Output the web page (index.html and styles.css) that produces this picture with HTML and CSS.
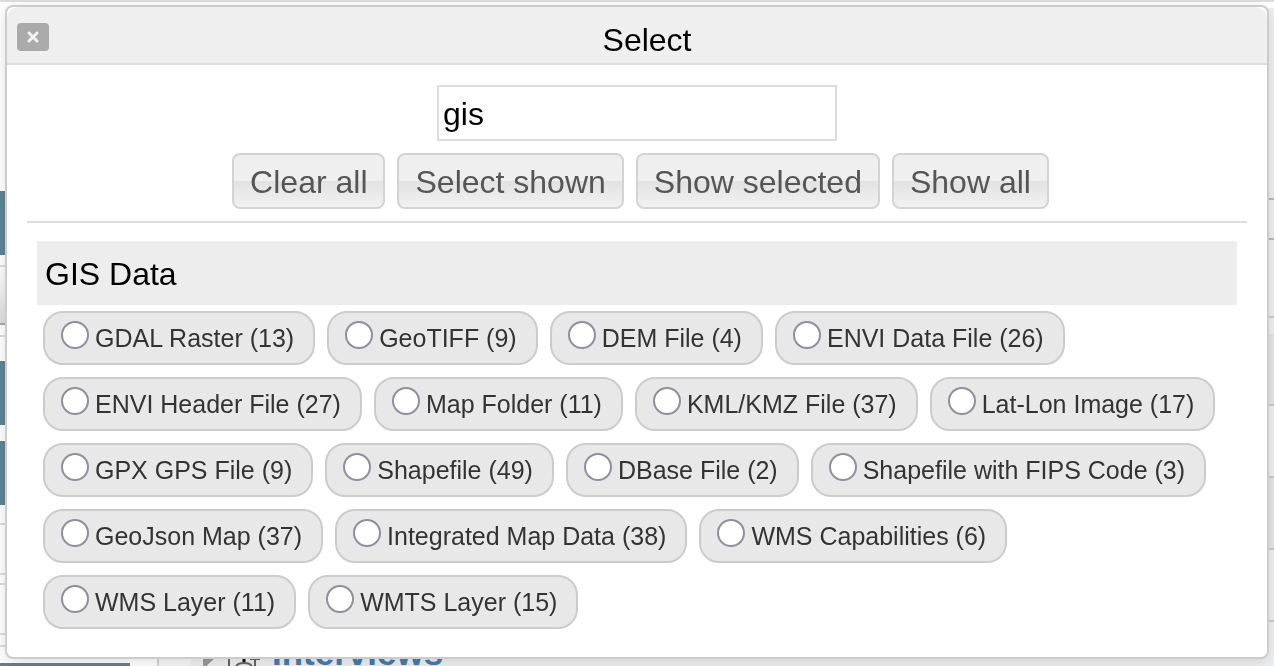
FILE: index.html
```
<!DOCTYPE html>
<html lang="en">
<head>
<meta charset="utf-8">
<title>Select</title>
<link rel="stylesheet" href="styles.css">
</head>
<body>
<div class="top-bar"></div>
<div class="page">
  <aside class="side">
    <div class="tab tab-first"></div>
    <div class="menu"></div>
    <div class="rule"></div>
    <div class="tab tab-mid"></div>
    <div class="tab"></div>
    <div class="box box-first"></div>
    <div class="box"></div>
    <div class="rule rule-last"></div>
    <div class="tab tab-last"></div>
  </aside>
  <main class="content">
    <div class="entries">
      <div class="row row-head"></div>
      <div class="row row-bar"></div>
      <div class="row row-tall"></div>
      <div class="row row-gap"></div>
      <div class="row row-alt"></div>
      <div class="row"></div>
      <div class="row row-alt"></div>
      <div class="row"></div>
    </div>
    <div class="entry">
      <svg class="arrow" width="14" height="28" viewBox="0 0 14 28" aria-hidden="true"><path d="M1 8H14V18L1 30z" fill="#999"/></svg>
      <svg class="page-icon" width="32" height="28" viewBox="0 0 32 28" aria-hidden="true"><path d="M1 0v28M8 29q0-5 8-5t8 5M22 20h10M27 20v8" fill="none" stroke="#666" stroke-width="2"/><path d="M16 19v4" stroke="#111" stroke-width="3"/></svg>
      <a href="#interviews" class="entry-link">Interviews</a>
    </div>
  </main>
</div>

<section class="dialog" role="dialog" aria-labelledby="dialog-title">
  <header class="dialog-head">
    <button type="button" class="close" aria-label="Close">
      <svg width="12" height="12" viewBox="0 0 12 12" aria-hidden="true"><path d="M2 2l8 8M10 2l-8 8" stroke="#f2f2f2" stroke-width="3" stroke-linecap="round"/></svg>
    </button>
    <h1 class="title" id="dialog-title">Select</h1>
  </header>
  <div class="dialog-body">
    <div class="tools">
      <input class="search" type="text" value="gis" aria-label="Search types">
      <div class="buttons">
        <button type="button" class="btn">Clear all</button>
        <button type="button" class="btn">Select shown</button>
        <button type="button" class="btn">Show selected</button>
        <button type="button" class="btn">Show all</button>
      </div>
    </div>
    <div class="group">
      <h2 class="group-title">GIS Data</h2>
      <div class="chips">
        <label class="chip"><input type="radio" name="type">GDAL Raster (13)</label>
        <label class="chip"><input type="radio" name="type">GeoTIFF (9)</label>
        <label class="chip"><input type="radio" name="type">DEM File (4)</label>
        <label class="chip"><input type="radio" name="type">ENVI Data File (26)</label>
        <label class="chip"><input type="radio" name="type">ENVI Header File (27)</label>
        <label class="chip"><input type="radio" name="type">Map Folder (11)</label>
        <label class="chip"><input type="radio" name="type">KML/KMZ File (37)</label>
        <label class="chip"><input type="radio" name="type">Lat-Lon Image (17)</label>
        <label class="chip"><input type="radio" name="type">GPX GPS File (9)</label>
        <label class="chip"><input type="radio" name="type">Shapefile (49)</label>
        <label class="chip"><input type="radio" name="type">DBase File (2)</label>
        <label class="chip"><input type="radio" name="type">Shapefile with FIPS Code (3)</label>
        <label class="chip"><input type="radio" name="type">GeoJson Map (37)</label>
        <label class="chip"><input type="radio" name="type">Integrated Map Data (38)</label>
        <label class="chip"><input type="radio" name="type">WMS Capabilities (6)</label>
        <label class="chip"><input type="radio" name="type">WMS Layer (11)</label>
        <label class="chip"><input type="radio" name="type">WMTS Layer (15)</label>
      </div>
    </div>
  </div>
</section>
</body>
</html>
```
FILE: styles.css
```
* { box-sizing: border-box; }

body {
  display: flex;
  flex-direction: column;
  margin: 0;
  height: 100vh;
  overflow: hidden;
  background: #fff;
  color: #000;
  font-family: "Liberation Sans", Arial, sans-serif;
}

/* Page behind the dialog */
.top-bar { flex: 0 0 8px; border-top: 2px solid #ddd; }
.page { display: flex; flex: 1; min-height: 0; overflow: hidden; }
.side { flex: 0 0 159px; border-right: 2px solid #d5d5d5; }
.tab { width: 130px; height: 64px; background: #5d8494; }
.tab-first { margin-top: 183px; }
.menu {
  height: 60px;
  margin-top: 10px;
  border-top: 2px solid #ddd;
  border-bottom: 2px solid #aaa;
  background: linear-gradient(#fff, #ddd);
}
.rule { height: 2px; margin-top: 10px; background: #ddd; }
.tab-mid { margin-top: 24px; margin-bottom: 16px; }
.box { height: 52px; margin-top: 8px; border: solid #ddd; border-width: 2px 0; background: #fff; }
.box-first { margin-top: 18px; }
.rule-last { margin-top: 10px; }
.tab-last { margin-top: 16px; }

.content { flex: 1; padding-left: 32px; background: linear-gradient(90deg, #f7f7f7 32px, #eef1f3 32px); }
.entries { height: 632px; overflow: hidden; }
.row { height: 72px; border-bottom: 2px solid #ccc; }
.row-head { height: 192px; border-color: #bbb; }
.row-bar { height: 40px; border-color: #bbb; }
.row-tall { height: 78px; }
.row-gap { height: 16px; border: 0; }
.row-alt { background: #e3e5e7; }
.entry { display: flex; align-items: center; gap: 12px; height: 26px; padding-left: 11px; }
.entry-link { color: #437db5; font-size: 35px; font-weight: bold; line-height: 26px; text-decoration: none; }

/* Dialog */
.dialog {
  position: fixed;
  top: 5px;
  left: 5px;
  right: 5px;
  border: 2px solid #ccc;
  border-radius: 8px;
  background: #fff;
  box-shadow: 0 4px 16px rgba(0, 0, 0, 0.12);
}
.dialog-head {
  display: flex;
  align-items: center;
  height: 58px;
  padding: 0 10px;
  border-bottom: 2px solid #ddd;
  border-radius: 12px 12px 0 0;
  background: #efefef;
}
.close {
  display: flex;
  align-items: center;
  justify-content: center;
  width: 32px;
  height: 28px;
  margin-bottom: -4px;
  padding: 0;
  border: 0;
  border-radius: 4px;
  background: #aaa;
}
.title { flex: 1; margin: 10px 12px 0 0; font-size: 32px; font-weight: normal; line-height: 36px; text-align: center; }
.dialog-body { padding: 20px 20px 22px; }
.tools {
  display: flex;
  flex-direction: column;
  align-items: center;
  gap: 12px;
  padding-bottom: 12px;
  border-bottom: 2px solid #ddd;
}
.search {
  width: 400px;
  height: 56px;
  padding: 2px 4px 0;
  border: 2px solid #ddd;
  background: #fff;
  color: #000;
  font: 32px "Liberation Sans", Arial, sans-serif;
}
.buttons { display: flex; gap: 12px; padding-left: 7px; }
.btn {
  height: 56px;
  padding: 2px 16px 0;
  border: 2px solid #d3d3d3;
  border-radius: 8px;
  background: linear-gradient(#efefef 50%, #e2e2e2 50%, #f1f1f1);
  color: #555;
  font: 32px "Liberation Sans", Arial, sans-serif;
}
.group { padding: 18px 10px 0; }
.group-title {
  margin: 0;
  padding: 2px 8px 0;
  background: #ededed;
  font-size: 32px;
  font-weight: normal;
  line-height: 62px;
}
.chips { display: flex; flex-wrap: wrap; gap: 12px; margin: 6px 0 0; padding: 0 6px 6px; }
.chip {
  display: flex;
  align-items: center;
  height: 54px;
  padding: 0 19px 0 16px;
  border: 2px solid #ccc;
  border-radius: 20px;
  background: #e8e8e8;
  color: #333;
  font-size: 25px;
  white-space: nowrap;
}
.chip input {
  appearance: none;
  width: 28px;
  height: 28px;
  margin: 0 6px 6px 0;
  border: 2px solid #8f8f9d;
  border-radius: 50%;
  background: #fff;
}
```
